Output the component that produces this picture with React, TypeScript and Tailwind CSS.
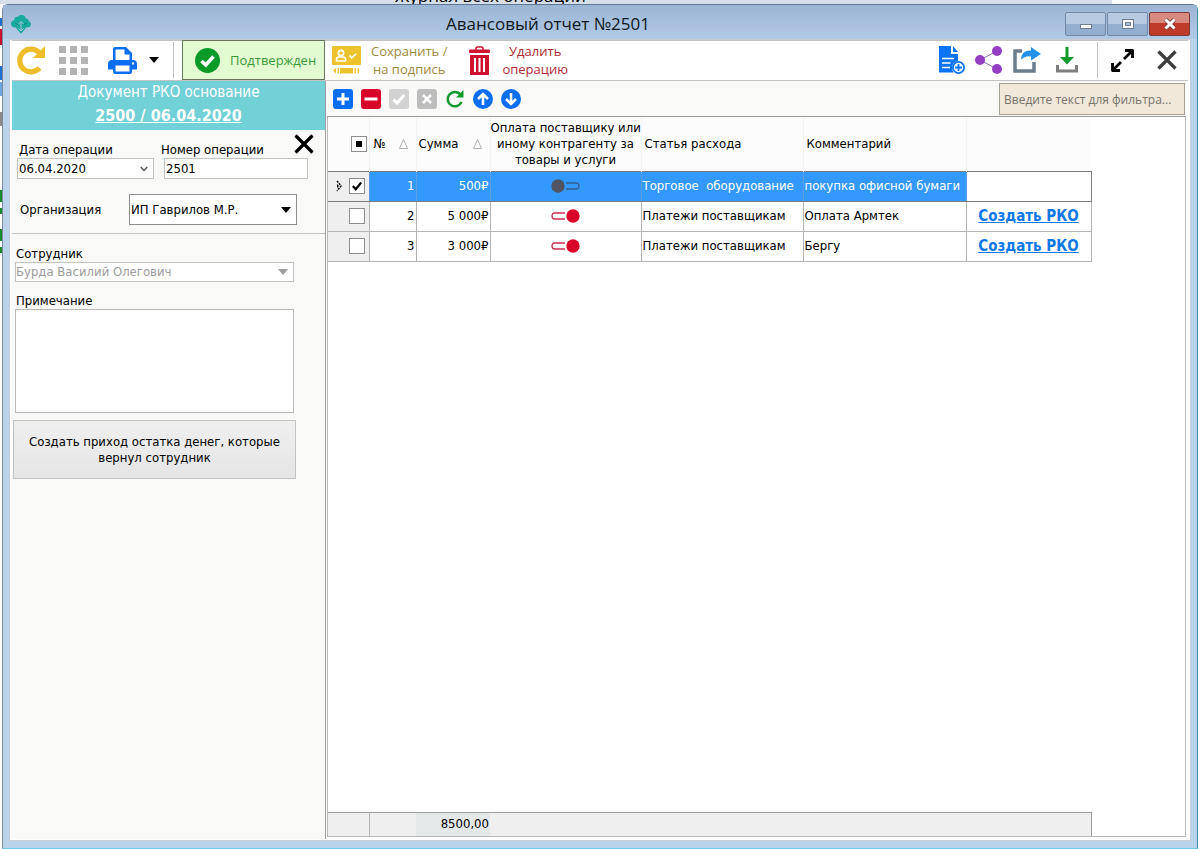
import { useState } from "react";
import type { ReactNode } from "react";

interface Row {
  id: number;
  sum: string;
  toSupplier: boolean;
  article: string;
  comment: string;
}

const rows: Row[] = [
  { id: 1, sum: "500₽", toSupplier: false, article: "Торговое  оборудование", comment: "покупка офисной бумаги" },
  { id: 2, sum: "5 000₽", toSupplier: true, article: "Платежи поставщикам", comment: "Оплата Армтек" },
  { id: 3, sum: "3 000₽", toSupplier: true, article: "Платежи поставщикам", comment: "Бергу" },
];

const LogoIcon = () => (
  <svg width="20" height="19" viewBox="0 0 20 19">
    <path
      d="M5 12.500C2 12.800 0 11 0 8.800C0 6.700 1.600 5.300 3.300 5.300C3.200 2.300 5.500 1.500 6.700 2C7.600.6 9 0 10.500 0C13 0 14.500 1.600 14.700 3.400C16.800 3.200 18 4.800 17.600 6.200C19 6.600 20 7.600 20 9.200C20 11.300 18 12.800 15 12.500L13 15.500L10 18.500L7 15.500Z"
      fill="#16a99c"
    />
    <path d="M10 7V16M7.500 9L10 6.500L12.500 9M7.500 13.500L10 16L12.500 13.500" stroke="#a9c3df" strokeWidth="1" fill="none" />
    <path d="M4 8.500L7 9.500M16 8L13 9.500" stroke="#0d8a80" strokeWidth="1" />
  </svg>
);

const ReloadIcon = () => (
  <svg width="30" height="30" viewBox="0 0 30 30">
    <path d="M23.500 23A11.300 11.300 0 1 1 23 7.500" fill="none" stroke="#edbd2c" strokeWidth="5.200" />
    <path d="M29 1V13H17Z" fill="#edbd2c" />
  </svg>
);

const GridIcon = () => (
  <svg width="29" height="29" viewBox="0 0 29 29" fill="#b3b3b3">
    {[0, 11, 22].map((y) =>
      [0, 11, 22].map((x) => <rect key={`${x}-${y}`} x={x} y={y} width="7" height="7" />)
    )}
  </svg>
);

const PrinterIcon = () => (
  <svg width="29" height="27" viewBox="0 0 29 27">
    <path d="M5 13V2Q5 0 7 0H18L24 6V13H25Q29 13 29 17V22.500H24V24.500Q24 27 22 27H7Q5 27 5 24.500V22.500H0V17Q0 13 4 13Z" fill="#0b6df0" />
    <path d="M7.500 13V2.500H16.500V7.500H21.500V13Z" fill="#fff" />
    <rect x="7.500" y="18.500" width="14" height="6" fill="#fff" />
    <rect x="24" y="15.500" width="2" height="2" fill="#fff" />
  </svg>
);

const CheckCircleIcon = () => (
  <svg width="25" height="25" viewBox="0 0 25 25">
    <circle cx="12.500" cy="12.500" r="12.500" fill="#0a9a25" />
    <path d="M6.500 13L10.800 17L18.500 8.500" fill="none" stroke="#fff" strokeWidth="3.500" />
  </svg>
);

const SignIcon = () => (
  <svg width="29" height="28" viewBox="0 0 29 28">
    <rect width="29" height="19" rx="1" fill="#edc32d" />
    <circle cx="9" cy="7" r="2.600" fill="none" stroke="#fff" strokeWidth="1.600" />
    <path d="M4.500 15V13.500Q4.500 11 7 11H11Q13.500 11 13.500 13.500V15Z" fill="none" stroke="#fff" strokeWidth="1.600" />
    <path d="M17.500 9.500L19.800 11.800L24 7.800" fill="none" stroke="#fff" strokeWidth="1.800" />
    <path d="M1 24.500L4 22V27.500ZM5.500 22H7V27.500H5.500ZM8 22H21V27.500H8ZM22.500 22H24V27.500H22.500ZM25.500 22H26.500Q28 24.700 26.500 27.500H25.500Z" fill="#edc32d" />
  </svg>
);

const TrashIcon = () => (
  <svg width="21" height="29" viewBox="0 0 21 29">
    <path d="M7 4V2.500Q7 1 8.500 1H12.500Q14 1 14 2.500V4" fill="none" stroke="#cf1230" strokeWidth="1.600" />
    <rect y="3.500" width="21" height="3.500" rx="1" fill="#cf1230" />
    <path d="M1 9H20V29H1Z" fill="#cf1230" />
    <path d="M6 12V26M10.500 12V26M15 12V26" stroke="#fff" strokeWidth="2" />
  </svg>
);

const DocAddIcon = () => (
  <svg width="26" height="28" viewBox="0 0 26 28">
    <path d="M0 0H12V8H19V15Q13 16 13 22Q13 24.500 14.500 26.500H0Z" fill="#0b74f5" />
    <path d="M14 0L19 6H14Z" fill="#0b74f5" />
    <path d="M3 12.500H15M3 17H11.500M3 21.500H11" stroke="#fff" strokeWidth="1.600" />
    <circle cx="19.500" cy="21.500" r="5.600" fill="#fff" stroke="#0b74f5" strokeWidth="1.800" />
    <path d="M19.500 18V25M16 21.500H23" stroke="#0b74f5" strokeWidth="1.800" />
  </svg>
);

const ShareIcon = () => (
  <svg width="27" height="28" viewBox="0 0 27 28">
    <path d="M22 5L5 14L22 23" fill="none" stroke="#8a72b0" strokeWidth="1" />
    <g fill="#953fc4">
      <circle cx="22" cy="5" r="5" />
      <circle cx="5" cy="14" r="5" />
      <circle cx="22" cy="23" r="5" />
    </g>
  </svg>
);

const ExportIcon = () => (
  <svg width="28" height="26" viewBox="0 0 28 26">
    <path d="M9 4H2V24H21V15" fill="none" stroke="#6c7d8b" strokeWidth="3.500" />
    <path d="M8 13Q8 3 18 3.500V0L28 7L18 13.500V9.500Q12 8.500 8 13Z" fill="#2390ea" />
  </svg>
);

const DownloadIcon = () => (
  <svg width="22" height="26" viewBox="0 0 22 26">
    <path d="M11 0V11" stroke="#109a2c" strokeWidth="3" />
    <path d="M4 10H18L11 17.500Z" fill="#109a2c" />
    <path d="M1.500 18V24H20.500V18" fill="none" stroke="#7e7e7e" strokeWidth="3" />
  </svg>
);

const ExpandIcon = () => (
  <svg width="23" height="23" viewBox="0 0 23 23">
    <path d="M3 20L10 13M13 10L20 3" stroke="#000" strokeWidth="2.800" />
    <path d="M14 1.500H21.500V9M1.500 14V21.500H9" fill="none" stroke="#000" strokeWidth="2.800" strokeLinejoin="round" />
  </svg>
);

const CrossIcon = ({ size, color }: { size: number; color: string }) => (
  <svg width={size} height={size} viewBox="0 0 20 20">
    <path d="M1.500 1.500L18.500 18.500M18.500 1.500L1.500 18.500" stroke={color} strokeWidth="3.200" />
  </svg>
);

const Triangle = ({ color = "#000" }: { color?: string }) => (
  <svg width="10" height="6" viewBox="0 0 10 6" className="shrink-0">
    <path d="M0 0H10L5 6Z" fill={color} />
  </svg>
);

const SortIcon = () => (
  <svg width="9" height="10" viewBox="0 0 9 10" className="shrink-0">
    <path d="M.5 9.500L4.500 .5L8.500 9.500Z" fill="#fff" stroke="#b0b0b0" />
  </svg>
);

const Toggle = ({ on }: { on: boolean }) =>
  on ? (
    <svg width="29" height="14" viewBox="0 0 29 14">
      <path d="M14 4H4Q1 4 1 7Q1 10 4 10H14" fill="none" stroke="#cf2d50" strokeWidth="1.300" />
      <circle cx="22" cy="7" r="6.700" fill="#d90429" />
    </svg>
  ) : (
    <svg width="29" height="14" viewBox="0 0 29 14">
      <path d="M15 4H25Q28 4 28 7Q28 10 25 10H15" fill="none" stroke="#35618f" strokeWidth="1.300" />
      <circle cx="7" cy="7" r="6.700" fill="#4e5560" />
    </svg>
  );

const Square = ({ color, round, children }: { color: string; round?: boolean; children: ReactNode }) => (
  <svg width="20" height="20" viewBox="0 0 20 20">
    <rect width="20" height="20" rx={round ? 10 : 3} fill={color} />
    <g fill="none" stroke="#fff" strokeWidth="3">
      {children}
    </g>
  </svg>
);

const gridActions = [
  { label: "Добавить", icon: <Square color="#0b6df0"><path d="M10 4V16M4 10H16" /></Square> },
  { label: "Удалить строку", icon: <Square color="#d90429"><path d="M3.500 10H16.500" /></Square> },
  { label: "Применить", icon: <Square color="#d2d2d2"><path d="M4.500 10.500L8 14L15.500 6" /></Square> },
  { label: "Отменить", icon: <Square color="#bdbdbd"><path d="M6 6L14 14M14 6L6 14" strokeWidth="2.500" /></Square> },
  {
    label: "Обновить",
    icon: (
      <svg width="20" height="20" viewBox="0 0 20 20">
        <path d="M16.500 13A7.200 7.200 0 1 1 15 5" fill="none" stroke="#109a2c" strokeWidth="2.500" />
        <path d="M18.500 1V8.500H11Z" fill="#109a2c" />
      </svg>
    ),
  },
  { label: "Вверх", icon: <Square color="#0b6df0" round><path d="M10 16V5M5 10L10 5L15 10" strokeWidth="2.600" /></Square> },
  { label: "Вниз", icon: <Square color="#0b6df0" round><path d="M10 4V15M5 10L10 15L15 10" strokeWidth="2.600" /></Square> },
];

const Columns = () => (
  <colgroup>
    <col className="w-[41px]" />
    <col className="w-[47px]" />
    <col className="w-[74px]" />
    <col className="w-[151px]" />
    <col className="w-[162px]" />
    <col className="w-[163px]" />
    <col className="w-[125px]" />
  </colgroup>
);

interface CheckProps {
  label: string;
  checked: boolean;
  partial?: boolean;
  onChange: () => void;
}

const Check = ({ label, checked, partial, onChange }: CheckProps) => (
  <span className="grid place-items-center">
    <input
      type="checkbox"
      aria-label={label}
      checked={checked}
      onChange={onChange}
      className="col-start-1 row-start-1 size-4 appearance-none border border-[#8c8c8c] bg-white"
    />
    {partial && <span className="pointer-events-none col-start-1 row-start-1 size-[6px] bg-black" />}
    {checked && !partial && (
      <svg width="10" height="10" viewBox="0 0 10 10" className="pointer-events-none col-start-1 row-start-1">
        <path d="M.8 5L3.800 8.300L9.200 1.500" fill="none" stroke="#000" strokeWidth="2.200" />
      </svg>
    )}
  </span>
);

const TitleBar = () => (
  <header className="flex h-[34px] items-center bg-linear-to-b from-[#9bb5d4] to-[#b3cae6] pt-1 pr-[7px] pl-2">
    <LogoIcon />
    <h1 className="flex-1 text-center font-['Open_Sans',sans-serif] text-[17px] leading-6 text-[#101820]">
      Авансовый отчет №2501
    </h1>
    <div className="flex gap-px">
      <button aria-label="Свернуть" className="flex h-6 w-[41px] items-center justify-center rounded-xs border border-[#7388a6] bg-linear-to-b from-[#b7cae2] from-50% to-[#93aece] to-50%">
        <span className="mt-1 h-[5px] w-3 border border-[#6d7c90] bg-white" />
      </button>
      <button aria-label="Развернуть" className="flex h-6 w-[41px] items-center justify-center rounded-xs border border-[#7388a6] bg-linear-to-b from-[#b7cae2] from-50% to-[#93aece] to-50%">
        <span className="flex h-[10px] w-3 items-center justify-center border border-[#6d7c90] bg-white">
          <span className="h-1 w-[6px] border border-[#6d7c90] bg-[#a8bdd8]" />
        </span>
      </button>
      <button aria-label="Закрыть окно" className="flex h-6 w-[41px] items-center justify-center rounded-xs border border-[#7d3a3a] bg-linear-to-b from-[#d98a80] from-45% to-[#bf3a28] to-45%">
        <svg width="14" height="12" viewBox="0 0 14 12">
          <path d="M2.500 1.500L11.500 10.500M11.500 1.500L2.500 10.500" stroke="#6b3a3a" strokeWidth="4.400" />
          <path d="M2.500 1.500L11.500 10.500M11.500 1.500L2.500 10.500" stroke="#fff" strokeWidth="3" />
        </svg>
      </button>
    </div>
  </header>
);

const Toolbar = () => (
  <div className="flex h-[41px] items-center border-y border-[#c4c4c4] bg-white pr-[11px] pb-px pl-1 font-['Open_Sans',sans-serif] text-[13px] leading-[18px] whitespace-nowrap">
    <button aria-label="Обновить документ"><ReloadIcon /></button>
    <button aria-label="Таблица" className="ml-[13px]"><GridIcon /></button>
    <button aria-label="Печать" className="ml-5"><PrinterIcon /></button>
    <button aria-label="Варианты печати" className="ml-3"><Triangle /></button>
    <span className="ml-[14px] h-9 w-px bg-[#c4c4c4]" />
    <button className="ml-2 flex h-10 w-[143px] items-center gap-[10px] border border-[#69755f] bg-[#e3fbd0] pl-3 text-[#3a9a3a]">
      <CheckCircleIcon />
      Подтвержден
    </button>
    <button className="ml-[7px] flex items-center gap-[10px] text-[#a08a3c]">
      <SignIcon />
      <span>Сохранить /<br />на подпись</span>
    </button>
    <button className="ml-[22px] flex items-center gap-3 text-[#ae2a36]">
      <TrashIcon />
      <span>Удалить<br />операцию</span>
    </button>
    <div className="ml-auto flex items-center gap-[11px]">
      <button aria-label="Новый документ"><DocAddIcon /></button>
      <button aria-label="Связи" className="-ml-px"><ShareIcon /></button>
      <button aria-label="Экспорт"><ExportIcon /></button>
      <button aria-label="Скачать" className="ml-1"><DownloadIcon /></button>
      <span className="ml-2 h-9 w-px bg-[#c4c4c4]" />
      <button aria-label="На весь экран" className="ml-[2px]"><ExpandIcon /></button>
      <button aria-label="Закрыть" className="ml-3"><CrossIcon size={20} color="#3c3c3c" /></button>
    </div>
  </div>
);

const Sidebar = () => (
  <aside className="flex w-[314px] shrink-0 flex-col border-r border-[#9c9c9c] bg-[#f9f9f7] text-[13px] leading-4">
    <div className="flex h-[49px] flex-col items-center bg-[#72d0d7] text-center text-white">
      <span className="text-[15px] leading-[22px]">Документ РКО основание</span>
      <a href="#rko" className="text-base leading-[26px] font-bold underline">2500 / 06.04.2020</a>
    </div>

    <div className="flex h-7 items-end pl-[7px]">
      <label htmlFor="date" className="w-[142px]">Дата операции</label>
      <label htmlFor="number" className="w-[133px]">Номер операции</label>
      <button aria-label="Очистить" className="mt-1 self-start"><CrossIcon size={20} color="#000" /></button>
    </div>
    <div className="flex gap-[10px] pl-[5px]">
      <div className="relative w-[137px]">
        <select id="date" className="h-[21px] w-full appearance-none border border-[#c2c2c2] bg-white pl-[1px]">
          <option>06.04.2020</option>
        </select>
        <svg width="8" height="6" viewBox="0 0 8 6" className="pointer-events-none absolute top-2 right-[6px]">
          <path d="M.8 1L4 4.500L7.200 1" fill="none" stroke="#555" strokeWidth="1.500" />
        </svg>
      </div>
      <input id="number" defaultValue="2501" className="h-[21px] w-[144px] border border-[#c2c2c2] bg-white pl-[1px]" />
    </div>

    <div className="mt-[15px] flex items-center pb-2 pl-2">
      <label htmlFor="org" className="w-[109px]">Организация</label>
      <div className="relative w-[168px]">
        <select id="org" className="h-[31px] w-full appearance-none border border-[#8f8f8f] bg-white pl-[1px]">
          <option>ИП Гаврилов М.Р.</option>
        </select>
        <span className="pointer-events-none absolute top-[13px] right-[6px]"><Triangle /></span>
      </div>
    </div>

    <div className="flex flex-col border-t border-[#c2c2c2] pt-3 pr-[31px] pl-[3px]">
      <label htmlFor="employee" className="pl-px">Сотрудник</label>
      <div className="relative">
        <select id="employee" disabled className="h-5 w-full appearance-none border border-[#c2c2c2] bg-white text-[#9c9c9c] opacity-100">
          <option>Бурда Василий Олегович</option>
        </select>
        <span className="pointer-events-none absolute top-[7px] right-[6px]"><Triangle color="#9c9c9c" /></span>
      </div>
      <label htmlFor="note" className="mt-[11px] pl-px">Примечание</label>
      <textarea id="note" className="h-[104px] resize-none border border-[#b9b9b9] bg-white" />
    </div>
    <button className="mt-[7px] mr-[29px] ml-px h-[59px] border border-[#c2c2c2] bg-linear-to-b from-[#efefef] to-[#e5e5e5]">
      Создать приход остатка денег, которые<br />вернул сотрудник
    </button>
  </aside>
);

const ExpenseGrid = () => {
  const [selected, setSelected] = useState<number[]>([1]);

  const toggle = (id: number) =>
    setSelected((prev) => (prev.includes(id) ? prev.filter((x) => x !== id) : [...prev, id]));

  const toggleAll = () => setSelected(selected.length === rows.length ? [] : rows.map((r) => r.id));

  return (
    <section className="flex min-w-0 flex-1 flex-col overflow-hidden border-x border-b border-[#b9b9b9] bg-white">
      <table className="w-[763px] table-fixed text-[13px] leading-4">
        <Columns />
        <thead>
          <tr className="h-[54px] bg-[#fcfcfc] text-left [&>th]:font-normal">
            <th className="pl-[21px]">
              <Check
                label="Выбрать все"
                checked={selected.length === rows.length}
                partial={selected.length > 0 && selected.length < rows.length}
                onChange={toggleAll}
              />
            </th>
            <th className="border-x border-[#f3f3f3] pl-1">
              <span className="flex items-center justify-between pr-2">№ <SortIcon /></span>
            </th>
            <th className="border-r border-[#f3f3f3] pl-[2px]">
              <span className="flex items-center justify-between pr-2">Сумма <SortIcon /></span>
            </th>
            <th className="border-r border-[#f3f3f3] text-center whitespace-nowrap">
              Оплата поставщику или<br />иному контрагенту за<br />товары и услуги
            </th>
            <th className="border-r border-[#f3f3f3] pl-[3px]">Статья расхода</th>
            <th className="border-r border-[#f3f3f3] pl-[3px]">Комментарий</th>
            <th aria-label="Действие" />
          </tr>
        </thead>
        <tbody>
          {rows.map((r) => {
            const current = r.id === 1;
            return (
              <tr
                key={r.id}
                className={`h-[30px] [&>td]:border ${
                  current
                    ? "text-white [&>td]:border-x-[#5b9ee6] [&>td]:border-y-[#7d7d7d]"
                    : "[&>td]:border-[#b4b4b4]"
                }`}
              >
                <td className="border-l-0! bg-[#efefef]">
                  <span className="flex items-center justify-end pr-1">
                    {current && (
                      <svg width="6" height="12" viewBox="0 0 6 12" className="mr-[7px]">
                        <path d="M1 1L5 6L1 11" fill="none" stroke="#000" strokeWidth="1.500" strokeDasharray="2 1" />
                        <path d="M1 4V8L3 6Z" fill="#000" />
                      </svg>
                    )}
                    <Check label={`Строка ${r.id}`} checked={selected.includes(r.id)} onChange={() => toggle(r.id)} />
                  </span>
                </td>
                <td className={`pr-[1px] text-right ${current ? "bg-[#3399ff]" : ""}`}>{r.id}</td>
                <td className={`pr-[1px] text-right ${current ? "bg-[#3399ff]" : ""}`}>{r.sum}</td>
                <td className={current ? "bg-[#3399ff]" : ""}>
                  <span className="flex justify-center"><Toggle on={r.toSupplier} /></span>
                </td>
                <td className={`pl-[1px] whitespace-pre ${current ? "bg-[#3399ff]" : ""}`}>{r.article}</td>
                <td className={`pl-[1px] whitespace-nowrap ${current ? "bg-[#3399ff]" : ""}`}>{r.comment}</td>
                <td className={`text-center ${current ? "border-r-[#7d7d7d]!" : ""}`}>
                  {!current && (
                    <a href={`#rko-${r.id}`} className="text-[15px] font-bold text-[#0f78e6] underline">
                      Создать РКО
                    </a>
                  )}
                </td>
              </tr>
            );
          })}
        </tbody>
      </table>

      <table className="mt-auto w-[763px] table-fixed border-t border-r border-[#9c9c9c] bg-[#efefef] text-[13px] leading-4">
        <Columns />
        <tbody>
          <tr className="h-6">
            <td className="border-r border-[#b4b4b4]" />
            <td />
            <td className="bg-[#e5e8e9] pr-[1px] text-right">8500,00</td>
            <td colSpan={4} />
          </tr>
        </tbody>
      </table>
    </section>
  );
};

// slivers of the journal window left of the frame
const JournalEdge = () => (
  <div className="flex w-[2px] shrink-0 flex-col">
    <span className="mt-[14px] h-2 bg-[#1f6fd0]" />
    <span className="mt-[3px] h-4 bg-[#c8102e]" />
    <span className="mt-[21px] h-[14px] bg-[#1f6fd0]" />
    <span className="mt-[2px] h-[14px] bg-[#6fa4e0]" />
    <span className="mt-4 h-[14px] bg-[#8a8a8a]" />
    <span className="mt-16 h-3 bg-[#168a2c]" />
    <span className="mt-[6px] h-[6px] bg-[#168a2c]" />
    <span className="mt-[15px] h-3 bg-[#168a2c]" />
    <span className="mt-[6px] h-[6px] bg-[#168a2c]" />
  </div>
);

const App = () => {
  const [filter, setFilter] = useState("");

  return (
    <div className="flex min-h-screen flex-col bg-white font-['DejaVu_Sans_Condensed','DejaVu_Sans',sans-serif] text-black">
      {/* window underneath */}
      <div className="flex h-1 items-end overflow-hidden bg-[#d5dfea]">
        <span className="ml-[395px] font-['Open_Sans',sans-serif] text-[17px] leading-4">Журнал всех операций</span>
        <span className="ml-auto h-1 w-[88px] bg-white" />
      </div>

      <div className="flex flex-1 pr-[2px]">
        <JournalEdge />
        <div className="flex min-w-0 flex-1 flex-col rounded-t-md border border-t-[#5f7590] border-r-[#3d8aa5] border-b-[#6cc8ee] border-l-[#7d8b9b] bg-[#bad2ea]">
          <TitleBar />

          <div className="mr-[6px] mb-[7px] ml-[6px] flex flex-1 flex-col border border-[#c9ccd0] bg-white pr-[2px] pb-px pl-[2px]">
            <Toolbar />

            <div className="flex flex-1">
              <Sidebar />
              <main className="flex min-w-0 flex-1 flex-col pr-[2px] pb-[2px] pl-px">
                <div className="flex h-9 shrink-0 items-center gap-2 border-b border-[#9c9c9c] bg-[#f9f9f7] pt-px pr-px pl-[6px]">
                  {gridActions.map((a) => (
                    <button key={a.label} aria-label={a.label}>{a.icon}</button>
                  ))}
                  <input
                    type="text"
                    aria-label="Фильтр"
                    placeholder="Введите текст для фильтра..."
                    value={filter}
                    onChange={(e) => setFilter(e.target.value)}
                    className="ml-auto h-8 w-[186px] border border-[#a5a096] bg-[#f1e8d9] px-1 font-['Open_Sans',sans-serif] text-[12px] placeholder:text-[#77726a]"
                  />
                </div>
                <ExpenseGrid />
              </main>
            </div>
          </div>
        </div>
      </div>
    </div>
  );
};

export default App;
